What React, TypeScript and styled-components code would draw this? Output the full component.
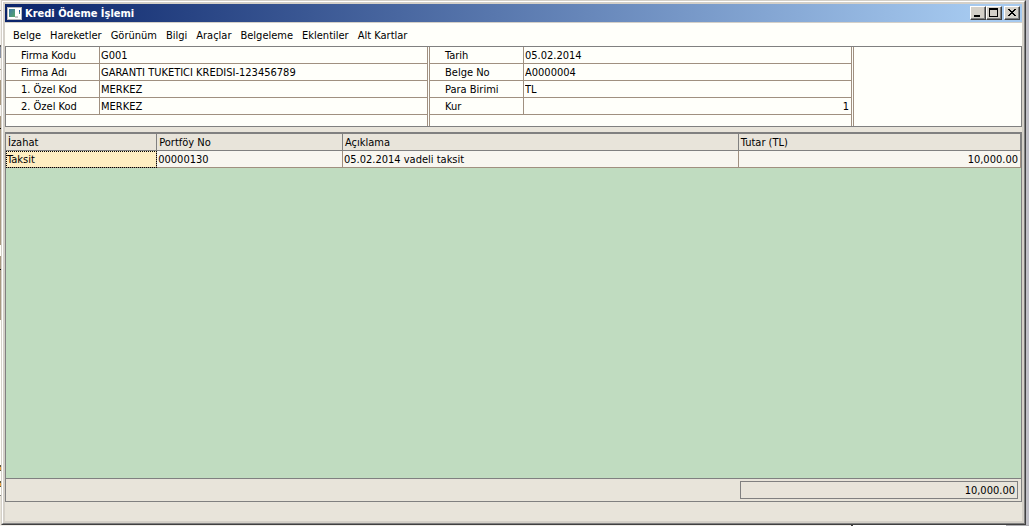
import React from 'react';
import styled, { createGlobalStyle } from 'styled-components';

const color = {
  face: '#d4d0c8',
  sand: '#e8e4da',
  paper: '#fffffa',
  line: '#808080',
  rule: '#a09080',
  green: '#c0dcc0',
  dark: '#404040',
};

const GlobalStyle = createGlobalStyle`
  *, *::before, *::after { box-sizing: border-box; }
  body {
    margin: 0;
    color: #000;
    font: 11px/16px "DejaVu Sans Condensed", "DejaVu Sans", Tahoma, sans-serif;
  }
  button, input { font: inherit; color: inherit; margin: 0; }
`;

const Desktop = styled.div`
  display: grid;
  grid-template-columns: 1px 1fr 3px;
  grid-template-rows: 1fr 1px;
  min-height: 100vh;
  background: #c0c0c8;
`;

const LeftSliver = styled.div`
  background: linear-gradient(
    #f4f2ee 10px, #908878 10px 11px, #f4f2ee 11px 45px,
    #606060 45px 47px, #8890a0 47px 58px, #f4f2ee 58px 69px,
    #908878 69px 70px, #f4f2ee 70px 80px, #a89880 80px 105px,
    #f4f2ee 105px 116px, #a89880 116px 128px, #000 128px 129px,
    #a89880 129px 245px, #fffffa 245px 256px, #a89880 256px 269px,
    #000 269px 270px, #a89880 270px 320px, #fffffa 320px 465px,
    #605840 465px 467px, #e8a040 467px 470px, #605840 470px 471px,
    #fffffa 471px 481px, #605840 481px 483px, #e8a040 483px 486px,
    #605840 486px 487px, #fffffa 487px 495px, #808080 495px 496px,
    #e8e4da 496px
  );
`;

const BottomSliver = styled.div`
  grid-column: 1 / -1;
  grid-row: 2;
  background: linear-gradient(90deg, #f0eeea 82.7%, #404040 82.7% 82.9%, #fff 82.9% 97.8%, #b0b0b4 97.8%);
`;

const Window = styled.main`
  display: flex;
  flex-direction: column;
  min-width: 0;
  border: 1px solid;
  border-color: ${color.face} ${color.dark} ${color.dark} ${color.face};
  background: ${color.face};
`;

const Frame = styled.div`
  flex: 1;
  display: flex;
  flex-direction: column;
  border: 1px solid;
  border-color: #fff ${color.line} ${color.line} #fff;
  padding: 2px;
`;

const TitleBar = styled.header`
  display: flex;
  align-items: center;
  height: 18px;
  padding: 0 2px;
  background: linear-gradient(90deg, #0a246a, #a6caf0 96%);
`;

const Title = styled.h1`
  flex: 1;
  margin: 0 0 0 3px;
  padding-top: 2px;
  color: #fff;
  font-size: 11px;
  line-height: 16px;
`;

const CaptionButton = styled.button<{ $spaced?: boolean }>`
  display: flex;
  width: 16px;
  height: 14px;
  padding: 0;
  margin-left: ${(p) => (p.$spaced ? 2 : 0)}px;
  border: 1px solid;
  border-color: #fff ${color.dark} ${color.dark} #fff;
  background: ${color.face};
  box-shadow: inset -1px -1px ${color.line};
`;

const MenuBar = styled.nav`
  display: flex;
  gap: 9px;
  height: 24px;
  padding: 2px 8px 0;
  border-top: 1px solid ${color.face};
  background: ${color.paper};
`;

const MenuItem = styled.button`
  padding: 0;
  border: 0;
  background: none;
  white-space: nowrap;
`;

const Client = styled.div`
  flex: 1;
  display: flex;
  flex-direction: column;
  padding-bottom: 19px;
  background: ${color.sand};
`;

const HeaderPanel = styled.form`
  display: grid;
  grid-template-columns: 422fr 423fr 168fr;
  gap: 1px;
  border: 1px solid ${color.line};
  background: ${color.paper};
`;

const FieldGroup = styled.div<{ $edges: 'right' | 'both' | 'left' }>`
  min-width: 0;
  padding-bottom: 11px;
  border: 0 solid ${color.rule};
  border-left-width: ${(p) => (p.$edges === 'right' ? 0 : 1)}px;
  border-right-width: ${(p) => (p.$edges === 'left' ? 0 : 1)}px;
`;

const FieldRow = styled.div`
  display: flex;
  height: 17px;
  border-bottom: 1px solid ${color.rule};
`;

const FieldLabel = styled.label`
  flex: 0 0 93px;
  padding: 1px 0 0 15px;
  line-height: 15px;
  white-space: nowrap;
`;

const FieldInput = styled.input<{ $numeric?: boolean }>`
  flex: 1;
  min-width: 0;
  height: 16px;
  padding: 1px 2px 0 1px;
  border: 0;
  border-left: 1px solid ${color.rule};
  border-radius: 0;
  outline: 0;
  background: transparent;
  line-height: 15px;
  text-align: ${(p) => (p.$numeric ? 'right' : 'left')};
`;

const GridPanel = styled.section`
  flex: 1;
  display: flex;
  flex-direction: column;
  margin-top: 5px;
  border: 1px solid ${color.line};
  border-top-width: 2px;
  background: ${color.green};
`;

const GridBody = styled.div`
  flex: 1;
`;

const Table = styled.table`
  width: 100%;
  table-layout: fixed;
  border-collapse: separate;
  border-spacing: 0;
  line-height: 14px;
`;

const Column = styled.col<{ $share?: number }>`
  width: ${(p) => (p.$share ? `${p.$share}%` : 'auto')};
`;

const HeadCell = styled.th`
  height: 17px;
  padding: 2px 2px 0;
  border: 0 solid ${color.line};
  border-width: 0 1px 1px 0;
  background: ${color.sand};
  font-weight: 400;
  text-align: left;
`;

const Cell = styled.td<{ $active?: boolean; $numeric?: boolean }>`
  height: 17px;
  padding: 2px ${(p) => (p.$numeric ? 2 : 1)}px 0;
  border: 0 solid ${color.rule};
  border-width: 0 1px 1px 0;
  background: ${(p) => (p.$active ? '#ffeec2' : '#f8f6f0')};
  outline: ${(p) => (p.$active ? '1px dotted #000' : 'none')};
  outline-offset: -1px;
  text-align: ${(p) => (p.$numeric ? 'right' : 'left')};
`;

const Totals = styled.footer`
  display: flex;
  justify-content: flex-end;
  height: 23px;
  padding: 2px 3px;
  border-top: 1px solid ${color.line};
  background: ${color.sand};
`;

const TotalInput = styled.input`
  width: 27.6%;
  height: 18px;
  padding: 0 2px;
  border: 1px solid ${color.line};
  border-radius: 0;
  outline: 0;
  background: transparent;
  text-align: right;
`;

const menus = ['Belge', 'Hareketler', 'Görünüm', 'Bilgi', 'Araçlar', 'Belgeleme', 'Eklentiler', 'Alt Kartlar'];

type Field = { id: string; label: string; value: string; numeric?: boolean };

const companyFields: Field[] = [
  { id: 'firma-kodu', label: 'Firma Kodu', value: 'G001' },
  { id: 'firma-adi', label: 'Firma Adı', value: 'GARANTI TUKETICI KREDISI-123456789' },
  { id: 'ozel-kod-1', label: '1. Özel Kod', value: 'MERKEZ' },
  { id: 'ozel-kod-2', label: '2. Özel Kod', value: 'MERKEZ' },
];

const documentFields: Field[] = [
  { id: 'tarih', label: 'Tarih', value: '05.02.2014' },
  { id: 'belge-no', label: 'Belge No', value: 'A0000004' },
  { id: 'para-birimi', label: 'Para Birimi', value: 'TL' },
  { id: 'kur', label: 'Kur', value: '1', numeric: true },
];

function Fields({ fields }: { fields: Field[] }) {
  return (
    <>
      {fields.map((f) => (
        <FieldRow key={f.id}>
          <FieldLabel htmlFor={f.id}>{f.label}</FieldLabel>
          <FieldInput id={f.id} defaultValue={f.value} $numeric={f.numeric} />
        </FieldRow>
      ))}
    </>
  );
}

function AppIcon() {
  return (
    <svg width="15" height="13" viewBox="0 0 15 13" shapeRendering="crispEdges" aria-hidden="true">
      <defs>
        <linearGradient id="pane" x1="0" y1="0" x2="1" y2="1">
          <stop offset="0" stopColor="#3c78a8" />
          <stop offset="1" stopColor="#58a868" />
        </linearGradient>
      </defs>
      <rect width="15" height="13" fill="#b8b8b8" />
      <rect x="1" y="1" width="13" height="11" fill="#fff" />
      <rect x="2" y="2" width="6" height="8" fill="url(#pane)" />
      <rect x="8" y="9" width="3" height="2" fill="#c8c8c8" />
      <rect x="12" y="3" width="1" height="2" fill="#2858a0" />
      <rect x="12" y="5" width="1" height="2" fill="#489078" />
    </svg>
  );
}

export default function App() {
  return (
    <>
      <GlobalStyle />
      <Desktop>
        <LeftSliver />
        <Window>
          <Frame>
            <TitleBar>
              <AppIcon />
              <Title>Kredi Ödeme İşlemi</Title>
              <CaptionButton type="button" aria-label="Simge durumuna küçült">
                <svg width="14" height="12" shapeRendering="crispEdges"><path d="M3 8h6v2H3z" /></svg>
              </CaptionButton>
              <CaptionButton type="button" aria-label="Ekranı kapla">
                <svg width="14" height="12" shapeRendering="crispEdges">
                  <path fillRule="evenodd" d="M2 1h9v9H2zM3 3v6h7V3z" />
                </svg>
              </CaptionButton>
              <CaptionButton type="button" aria-label="Kapat" $spaced>
                <svg width="14" height="12" shapeRendering="crispEdges">
                  <path d="M3 2h2v1h1v1h2V3h1V2h2v1h-1v1H9v1H8v1h1v1h1v1h1v1H9V8H8V7H6v1H5v1H3V8h1V7h1V6h1V5H5V4H4V3H3z" />
                </svg>
              </CaptionButton>
            </TitleBar>
            <MenuBar>
              {menus.map((m) => (
                <MenuItem key={m} type="button">{m}</MenuItem>
              ))}
            </MenuBar>
            <Client>
              <HeaderPanel>
                <FieldGroup $edges="right"><Fields fields={companyFields} /></FieldGroup>
                <FieldGroup $edges="both"><Fields fields={documentFields} /></FieldGroup>
                <FieldGroup $edges="left" />
              </HeaderPanel>
              <GridPanel>
                <GridBody>
                  <Table>
                    <colgroup>
                      <Column $share={14.9} />
                      <Column $share={18.3} />
                      <Column $share={39} />
                      <Column />
                    </colgroup>
                    <thead>
                      <tr>
                        <HeadCell>İzahat</HeadCell>
                        <HeadCell>Portföy No</HeadCell>
                        <HeadCell>Açıklama</HeadCell>
                        <HeadCell>Tutar (TL)</HeadCell>
                      </tr>
                    </thead>
                    <tbody>
                      <tr>
                        <Cell $active>Taksit</Cell>
                        <Cell>00000130</Cell>
                        <Cell>05.02.2014 vadeli taksit</Cell>
                        <Cell $numeric>10,000.00</Cell>
                      </tr>
                    </tbody>
                  </Table>
                </GridBody>
                <Totals>
                  <TotalInput aria-label="Toplam tutar" readOnly value="10,000.00" />
                </Totals>
              </GridPanel>
            </Client>
          </Frame>
        </Window>
        <BottomSliver />
      </Desktop>
    </>
  );
}
